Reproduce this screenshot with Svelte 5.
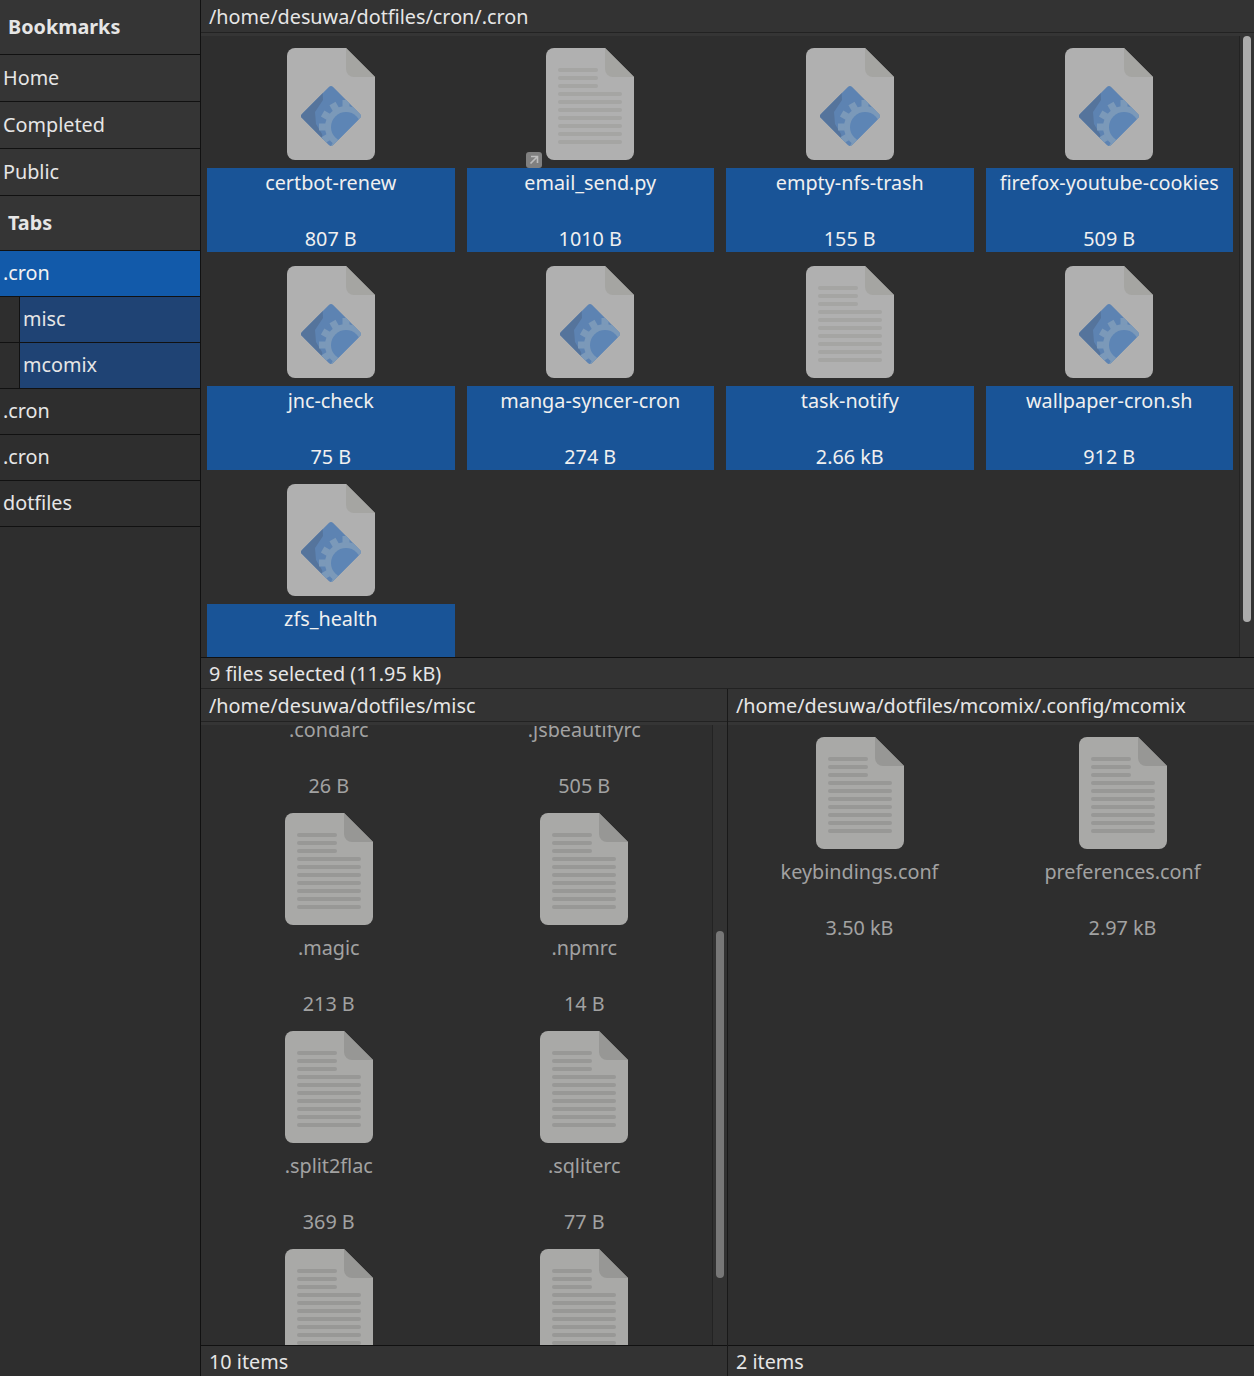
<script>
  const bookmarks = ['Home', 'Completed', 'Public']
  const tabs = [
    { name: '.cron', kind: 'active' },
    { name: 'misc', kind: 'child' },
    { name: 'mcomix', kind: 'child' },
    { name: '.cron', kind: '' },
    { name: '.cron', kind: '' },
    { name: 'dotfiles', kind: '' }
  ]

  const cron = [
    { name: 'certbot-renew', size: '807 B', icon: 'script' },
    { name: 'email_send.py', size: '1010 B', icon: 'text', link: true },
    { name: 'empty-nfs-trash', size: '155 B', icon: 'script' },
    { name: 'firefox-youtube-cookies', size: '509 B', icon: 'script' },
    { name: 'jnc-check', size: '75 B', icon: 'script' },
    { name: 'manga-syncer-cron', size: '274 B', icon: 'script' },
    { name: 'task-notify', size: '2.66 kB', icon: 'text' },
    { name: 'wallpaper-cron.sh', size: '912 B', icon: 'script' },
    { name: 'zfs_health', size: '', icon: 'script' }
  ]

  const misc = [
    { name: '.condarc', size: '26 B', icon: 'text' },
    { name: '.jsbeautifyrc', size: '505 B', icon: 'text' },
    { name: '.magic', size: '213 B', icon: 'text' },
    { name: '.npmrc', size: '14 B', icon: 'text' },
    { name: '.split2flac', size: '369 B', icon: 'text' },
    { name: '.sqliterc', size: '77 B', icon: 'text' },
    { name: '', size: '', icon: 'text' },
    { name: '', size: '', icon: 'text' }
  ]

  const mcomix = [
    { name: 'keybindings.conf', size: '3.50 kB', icon: 'text' },
    { name: 'preferences.conf', size: '2.97 kB', icon: 'text' }
  ]

  const lineRows = [22, 30, 38, 46, 54, 62, 70, 78, 86, 94]
  const teeth = [0, 1, 2, 3, 4, 5, 6, 7, 8, 9, 10, 11]
</script>

{#snippet fileIcon(item)}
  <svg class="icon" width="88" height="112" viewBox="0 0 88 112">
    <path class="sheet" d="M8 0H59L88 29V104a8 8 0 0 1-8 8H8a8 8 0 0 1-8-8V8a8 8 0 0 1 8-8Z" />
    <path class="fold" d="M59 0V21a8 8 0 0 0 8 8H88Z" />
    {#if item.icon === 'text'}
      {#each lineRows as y, i}
        <rect class="line" x="12" y={y - 2} width={i < 3 ? 40 : 64} height="4" rx="2" />
      {/each}
    {:else}
      <g class="gear">
        <rect class="gear-base" x="22" y="46" width="44" height="44" rx="3" transform="rotate(45 44 68)" />
        <clipPath id="diamond-{item.name}">
          <rect x="22" y="46" width="44" height="44" rx="3" transform="rotate(45 44 68)" />
        </clipPath>
        <g clip-path="url(#diamond-{item.name})">
          <path class="gear-dark" d="M10 30H35L36 52 28 64 29 76 35 86 38 104H10Z" />
          <g class="gear-ring">
            {#each teeth as t}
              <rect x="55.5" y="52" width="7" height="8" transform="rotate({t * 30} 59 79)" />
            {/each}
            <circle cx="59" cy="79" r="21" />
          </g>
          <circle class="gear-hole" cx="59" cy="79" r="15" />
        </g>
      </g>
    {/if}
  </svg>
{/snippet}

{#snippet fileGrid(items, cls)}
  <div class="grid {cls}">
    {#each items as item}
      <div class="file">
        <div class="icon-wrap">
          {@render fileIcon(item)}
          {#if item.link}
            <span class="badge">
              <svg width="16" height="16" viewBox="0 0 16 16">
                <path d="M5 4.5H11.5V11M11 5L4.5 11.5" fill="none" stroke="#bdbdbd" stroke-width="1.6" />
              </svg>
            </span>
          {/if}
        </div>
        <div class="label">
          <div class="line-text">{item.name}</div>
          <div class="line-text"></div>
          <div class="line-text">{item.size}</div>
        </div>
      </div>
    {/each}
  </div>
{/snippet}

<div class="window">
  <aside class="sidebar">
    <div class="heading first">Bookmarks</div>
    {#each bookmarks as b}
      <div class="bookmark">{b}</div>
    {/each}
    <div class="heading">Tabs</div>
    {#each tabs as t}
      <div class="tab {t.kind}"><span>{t.name}</span></div>
    {/each}
  </aside>

  <main class="content">
    <section class="pane top focused">
      <header class="path">/home/desuwa/dotfiles/cron/.cron</header>
      <div class="body">
        <div class="scroller">{@render fileGrid(cron, 'four')}</div>
        <div class="track"><div class="thumb thumb-top"></div></div>
      </div>
      <footer class="status">9 files selected (11.95 kB)</footer>
    </section>

    <div class="split">
      <section class="pane left">
        <header class="path">/home/desuwa/dotfiles/misc</header>
        <div class="body">
          <div class="scroller">{@render fileGrid(misc, 'two scrolled')}</div>
          <div class="track"><div class="thumb thumb-misc"></div></div>
        </div>
        <footer class="status">10 items</footer>
      </section>
      <section class="pane">
        <header class="path">/home/desuwa/dotfiles/mcomix/.config/mcomix</header>
        <div class="body">
          <div class="scroller">{@render fileGrid(mcomix, 'two')}</div>
        </div>
        <footer class="status">2 items</footer>
      </section>
    </div>
  </main>
</div>

<style>
  :global(body) {
    margin: 0;
    background: #2e2e2e;
    font-family: 'Noto Sans', sans-serif;
    font-size: 19.8px;
    color: #e6e6e6;
  }
  .window {
    display: flex;
    width: 1254px;
    height: 1376px;
    overflow: hidden;
  }
  .sidebar {
    width: 200px;
    flex: none;
    border-right: 1px solid #111;
    background: #2e2e2e;
  }
  .heading {
    height: 54px;
    line-height: 54px;
    padding-left: 8px;
    font-weight: 700;
    background: #353535;
    border-bottom: 1px solid #111;
    color: #e6e6e6;
  }
  .bookmark {
    height: 46px;
    line-height: 46px;
    padding-left: 3px;
    background: #353535;
    border-bottom: 1px solid #111;
  }
  .tab {
    height: 45px;
    line-height: 43px;
    border-bottom: 1px solid #111;
  }
  .tab span {
    display: block;
    height: 100%;
    padding-left: 3px;
  }
  .tab.active {
    background: #125aaa;
    color: #f2f2f2;
  }
  .tab.child {
    padding-left: 19px;
  }
  .tab.child span {
    background: #1f4374;
    border-left: 1px solid #111;
  }
  .content {
    flex: 1;
    min-width: 0;
    display: flex;
    flex-direction: column;
  }
  .pane {
    display: flex;
    flex-direction: column;
    min-width: 0;
    flex: 1;
    color: #a2a2a2;
  }
  .pane.top {
    flex: none;
    height: 688px;
    border-bottom: 1px solid #222;
    color: #f0f0f0;
  }
  .split {
    flex: 1;
    min-height: 0;
    display: flex;
  }
  .pane.left {
    flex: none;
    width: 526px;
    border-right: 1px solid #191919;
  }
  .path {
    flex: none;
    height: 32px;
    line-height: 33px;
    padding-left: 8px;
    background: #333;
    border-bottom: 1px solid #222;
    color: #e6e6e6;
    white-space: nowrap;
  }
  .body {
    flex: 1;
    min-height: 0;
    display: flex;
    background: #2e2e2e;
    border-top: 3px solid #353535;
    overflow: hidden;
  }
  .scroller {
    flex: 1;
    min-width: 0;
    overflow: hidden;
  }
  .track {
    flex: none;
    width: 14px;
    border-left: 1px solid #232323;
    background: #323232;
    position: relative;
  }
  .thumb {
    position: absolute;
    left: 3px;
    width: 8px;
    border-radius: 4px;
  }
  .thumb-top {
    top: 0;
    height: 586px;
    background: #ababab;
  }
  .thumb-misc {
    top: 206px;
    height: 347px;
    background: #777;
  }
  .status {
    flex: none;
    height: 30px;
    line-height: 31px;
    padding-left: 8px;
    background: #333;
    border-top: 1px solid #111;
    color: #e6e6e6;
    white-space: nowrap;
  }
  .grid {
    display: grid;
    gap: 14px 12px;
    padding: 12px 6px;
  }
  .grid.four {
    grid-template-columns: repeat(4, 1fr);
  }
  .grid.two {
    grid-template-columns: repeat(2, 1fr);
  }
  .grid.scrolled {
    margin-top: -142px;
  }
  .file {
    display: flex;
    flex-direction: column;
    align-items: stretch;
    min-width: 0;
  }
  .icon-wrap {
    position: relative;
    width: 88px;
    height: 112px;
    margin: 0 auto 8px;
  }
  .icon {
    display: block;
  }
  .badge {
    position: absolute;
    left: -20px;
    bottom: -8px;
    width: 16px;
    height: 16px;
    border-radius: 3px;
    background: #808080;
  }
  .badge svg {
    display: block;
  }
  .label {
    height: 83px;
    padding-top: 1px;
    text-align: center;
    white-space: nowrap;
    overflow: hidden;
  }
  .line-text {
    height: 28px;
    line-height: 28px;
  }
  .top .label {
    background: #195497;
    color: #f0f0f0;
  }
  .sheet {
    fill: #a9a9a7;
  }
  .fold {
    fill: #979795;
  }
  .line {
    fill: #989896;
  }
  .top .sheet {
    fill: #b0b0b0;
  }
  .top .fold {
    fill: #a5a5a2;
  }
  .top .line {
    fill: #a5a5a3;
  }
  .gear-base {
    fill: #5d83b2;
  }
  .gear-dark {
    fill: #55749c;
  }
  .gear-ring {
    fill: #7b99b9;
  }
  .gear-hole {
    fill: #5d85b5;
  }
</style>
